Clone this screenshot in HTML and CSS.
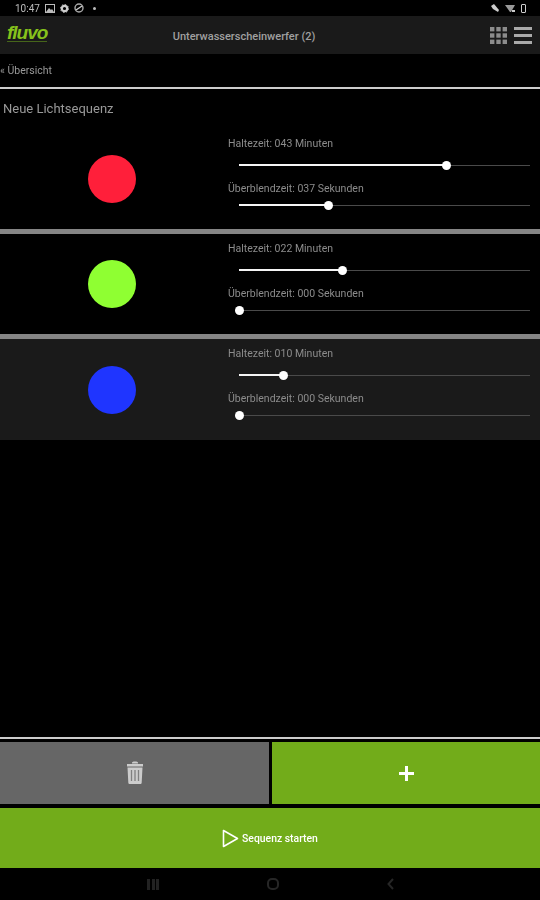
FILE: index.html
```html
<!DOCTYPE html>
<html lang="de">
<head>
  <meta charset="UTF-8">
  <meta name="viewport" content="width=device-width, initial-scale=1.0">
  <title>Unterwasserscheinwerfer (2)</title>
  <link rel="stylesheet" href="styles.css">
</head>
<body>
  <!-- Statusleiste -->
  <div class="statusbar">
    <div class="status-left">
      <span>10:47</span>
      <svg width="10" height="9" viewBox="0 0 10 9"><rect x="0.5" y="0.5" width="9" height="8" fill="none" stroke="#bbb"/><path d="M1 8l3-4 2 2 1-1 2 3z" fill="#bbb"/></svg>
      <svg width="9" height="9" viewBox="0 0 9 9"><circle cx="4.5" cy="4.5" r="2.7" fill="none" stroke="#ccc" stroke-width="2.2"/><circle cx="4.5" cy="4.5" r="4" fill="none" stroke="#ccc" stroke-width="1" stroke-dasharray="1.5 1.6"/></svg>
      <svg width="10" height="10" viewBox="0 0 10 10"><circle cx="5" cy="5" r="4" fill="none" stroke="#aaa" stroke-width="1.4"/><path d="M2 7l6-4" stroke="#ccc" stroke-width="1.4"/></svg>
      <span class="status-dot"></span>
    </div>
    <div class="status-right">
      <svg width="10" height="10" viewBox="0 0 10 10"><path d="M1 3l3-2 5 6-1 2-5-3z" fill="#ccc"/></svg>
      <svg width="11" height="9" viewBox="0 0 11 9"><path d="M0 1h10L6 8H5z" fill="#999"/><path d="M7 6h3v2H7z" fill="#ccc"/></svg>
      <span class="battery"></span>
    </div>
  </div>

  <header class="topbar">
    <span class="logo">fluvo</span>
    <span class="topbar-title">Unterwasserscheinwerfer (2)</span>
    <div class="topbar-icons">
      <svg width="17" height="17" viewBox="0 0 17 17" fill="#8c8c8c">
        <rect x="0" y="0" width="4.4" height="4.4"/><rect x="6.3" y="0" width="4.4" height="4.4"/><rect x="12.6" y="0" width="4.4" height="4.4"/>
        <rect x="0" y="6.3" width="4.4" height="4.4"/><rect x="6.3" y="6.3" width="4.4" height="4.4"/><rect x="12.6" y="6.3" width="4.4" height="4.4"/>
        <rect x="0" y="12.6" width="4.4" height="4.4"/><rect x="6.3" y="12.6" width="4.4" height="4.4"/><rect x="12.6" y="12.6" width="4.4" height="4.4"/>
      </svg>
      <div class="burger"><span></span><span></span><span></span></div>
    </div>
  </header>

  <div class="backrow">« Übersicht</div>

  <main class="content">
    <h2 class="seq-title">Neue Lichtsequenz</h2>

    <section class="step">
      <div class="step-color"><div class="dot dot-red"></div></div>
      <div class="step-sliders">
        <label>Haltezeit: 043 Minuten</label>
        <div class="slider slider-a"><div class="fill" style="width: 71%"></div><div class="thumb"></div></div>
        <label>Überblendzeit: 037 Sekunden</label>
        <div class="slider slider-b"><div class="fill" style="width: 30.5%"></div><div class="thumb"></div></div>
      </div>
    </section>

    <section class="step">
      <div class="step-color"><div class="dot dot-green"></div></div>
      <div class="step-sliders">
        <label>Haltezeit: 022 Minuten</label>
        <div class="slider slider-a"><div class="fill" style="width: 35.5%"></div><div class="thumb"></div></div>
        <label>Überblendzeit: 000 Sekunden</label>
        <div class="slider slider-b"><div class="fill" style="width: 0%"></div><div class="thumb"></div></div>
      </div>
    </section>

    <section class="step step-active">
      <div class="step-color"><div class="dot dot-blue"></div></div>
      <div class="step-sliders">
        <label>Haltezeit: 010 Minuten</label>
        <div class="slider slider-a"><div class="fill" style="width: 15.2%"></div><div class="thumb"></div></div>
        <label>Überblendzeit: 000 Sekunden</label>
        <div class="slider slider-b"><div class="fill" style="width: 0%"></div><div class="thumb"></div></div>
      </div>
    </section>
  </main>

  <div class="actions">
    <div class="action-row">
      <button class="btn btn-delete">
        <svg width="20" height="24" viewBox="0 1 20 24">
          <path d="M7 2.500C7 1 13 1 13 2.500V3.500H7z" fill="#ccc"/>
          <path d="M2 4h16v2.500H2z" fill="#ccc"/>
          <path d="M2.500 7.500h15l-.8 15c0 1-.7 1.500-1.500 1.500H4.800c-.8 0-1.500-.5-1.500-1.500z" fill="#ccc"/>
          <path d="M6.500 10v11M10 10v11M13.500 10v11" stroke="#808080" stroke-width="1.300"/>
        </svg>
      </button>
      <button class="btn btn-add">
        <svg width="17" height="17" viewBox="0 0 17 17"><path d="M8.500 1v15M1 8.500h15" stroke="#fff" stroke-width="3"/></svg>
      </button>
    </div>
    <button class="btn btn-start">
      <svg width="17" height="19" viewBox="0 0 17 19"><path d="M1.500 1.500v16L15.500 9.500z" fill="none" stroke="#fff" stroke-width="1.600" stroke-linejoin="round"/></svg>
      <span>Sequenz starten</span>
    </button>
  </div>

  <!-- Navigationsleiste -->
  <nav class="navbar">
    <svg width="12" height="11" viewBox="0 0 12 11" fill="#222"><rect x="0" y="0" width="3" height="11"/><rect x="5" y="0" width="3" height="11"/><rect x="9" y="0" width="3" height="11"/></svg>
    <svg width="12" height="12" viewBox="0 0 12 12"><rect x="1" y="1" width="10" height="10" rx="4" fill="none" stroke="#262626" stroke-width="2"/></svg>
    <svg width="7" height="12" viewBox="0 0 7 12"><path d="M6 1L1.500 6 6 11" fill="none" stroke="#262626" stroke-width="2"/></svg>
  </nav>
</body>
</html>
```

FILE: styles.css
```css
* {
  box-sizing: border-box;
}

body {
  margin: 0;
  width: 540px;
  height: 900px;
  overflow: hidden;
  background: #000;
  color: #aaa;
  font-family: 'Roboto', 'Liberation Sans', sans-serif;
  display: flex;
  flex-direction: column;
  filter: blur(0.4px);
}

.statusbar {
  height: 16px;
  padding: 0 14px 0 15px;
  display: flex;
  justify-content: space-between;
  align-items: center;
  font-size: 10px;
  color: #bbb;
}

.status-left, .status-right {
  display: flex;
  align-items: center;
  gap: 5px;
}

.status-dot {
  width: 3px;
  height: 3px;
  margin-left: 4px;
  border-radius: 50%;
  background: #bbb;
}

.battery {
  width: 5px;
  height: 9px;
  border: 1.500px solid #ccc;
  border-radius: 1px;
}

.topbar {
  height: 38px;
  background: #1a1a1a;
  padding: 0 8px 0 7px;
  display: flex;
  align-items: center;
  position: relative;
}

/* trait vert sous le logo = le petit slogan illisible */
.logo {
  font-family: 'Liberation Sans', sans-serif;
  font-size: 19px;
  line-height: 17px;
  font-style: italic;
  font-weight: bold;
  letter-spacing: -1px;
  color: #86c21c;
  margin-top: -4px;
  border-bottom: 1px solid #46651a;
}

.topbar-title {
  position: absolute;
  left: 0;
  right: 0;
  text-align: center;
  font-size: 11px;
  font-weight: 500;
  color: #a0a0a0;
  padding: 2px 52px 0 0;
}

.topbar-icons {
  margin-left: auto;
  display: flex;
  align-items: center;
  gap: 7px;
}

.burger {
  width: 18px;
  display: flex;
  flex-direction: column;
  gap: 4px;
}

.burger span {
  height: 3px;
  background: #aaa;
}

.backrow {
  height: 33px;
  line-height: 33px;
  font-size: 10.500px;
  color: #999;
}

.content {
  flex: 1;
  border-top: 2px solid #ccc;
}

.seq-title {
  margin: 0;
  height: 40px;
  padding: 12px 0 0 3px;
  font-size: 13px;
  line-height: 15px;
  font-weight: 400;
  color: #999;
}

.step {
  height: 105px;
  display: flex;
  border-bottom: 5px solid #858585;
}

.step:last-child {
  border-bottom: 0;
  height: 101px;
}

.step-active {
  background: #1a1a1a;
}

.step-color {
  width: 224px;
  display: flex;
  align-items: center;
  justify-content: center;
}

.dot {
  width: 48px;
  height: 48px;
  border-radius: 50%;
}

.dot-red { background: #ff1f3a; }
.dot-green { background: #8fff32; }
.dot-blue { background: #1f35ff; }

.step-sliders {
  flex: 1;
  padding: 8px 10px 0 4px;
}

.step-sliders label {
  display: block;
  font-size: 10.500px;
  line-height: 14px;
  color: #8c8c8c;
}

.slider {
  position: relative;
  display: flex;
  align-items: center;
  margin-left: 11px;
  height: 10px;
  background: linear-gradient(#4a4a4a, #4a4a4a) center / 100% 1px no-repeat;
}

.slider-a {
  margin-top: 9px;
  margin-bottom: 12px;
}

.slider-b {
  margin-top: 4px;
}

.fill {
  height: 2px;
  background: #f4f4f4;
}

.thumb {
  width: 9px;
  height: 9px;
  margin-left: -4px;
  border-radius: 50%;
  background: #fff;
  flex: none;
}

.actions {
  border-top: 2px solid #ccc;
  padding-top: 3px;
  display: flex;
  flex-direction: column;
  gap: 4px;
}

.action-row {
  display: flex;
  gap: 3px;
}

.btn {
  border: none;
  padding: 0;
  display: flex;
  align-items: center;
  justify-content: center;
  color: #fff;
  font-family: inherit;
  cursor: pointer;
}

.btn-delete {
  width: 269px;
  height: 62px;
  background: #666;
}

.btn-add {
  flex: 1;
  height: 62px;
  background: #72ac1a;
}

.btn-start {
  height: 60px;
  gap: 3px;
  background: #72ac1a;
  font-size: 10.400px;
  font-weight: 500;
}

.navbar {
  height: 32px;
  display: flex;
  align-items: center;
  justify-content: center;
  gap: 108px;
}
```
